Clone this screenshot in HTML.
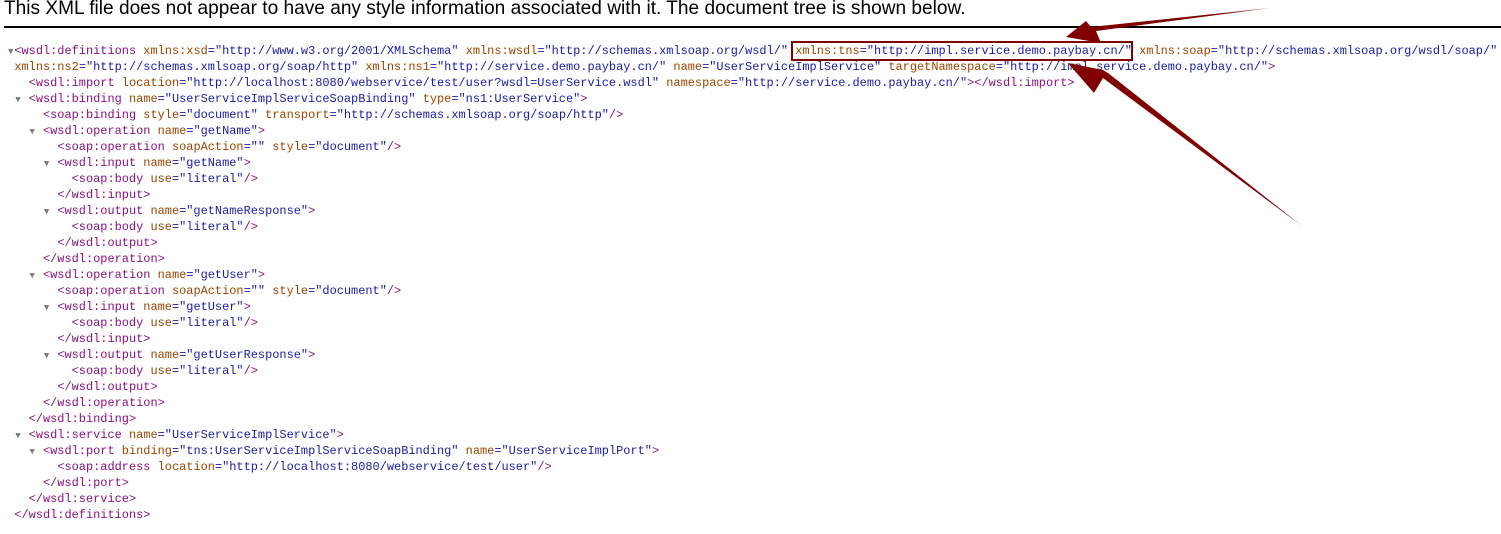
<!DOCTYPE html>
<html><head><meta charset="utf-8"><style>
body{margin:0;background:#fff;width:1501px;height:534px;overflow:hidden;position:relative}
.hdr{position:absolute;left:4px;top:-2px;font:19.1px "Liberation Sans",sans-serif;color:#000;white-space:nowrap}
.rule{position:absolute;left:4px;right:0;top:26px;height:2px;background:#000}
.x{position:absolute;left:0;top:43px;font:11.95px/16px "Liberation Mono",monospace;color:#1a1aa6}
.x div{height:16px;white-space:pre}
.t{color:#881280}.a{color:#994500}
.tri{display:inline-block;width:7.17px;color:#777;font-size:9px;text-align:center}
.box{position:absolute;left:791px;top:41px;width:338px;height:16px;border:2px solid #800000}
svg{position:absolute;left:0;top:0}
</style></head><body>
<div class="hdr">This XML file does not appear to have any style information associated with it. The document tree is shown below.</div>
<div class="rule"></div>
<div class="x"><div> <span class="tri">▼</span><span class="t">&lt;wsdl:definitions</span> <span class="a">xmlns:xsd</span>="http://www.w3.org/2001/XMLSchema" <span class="a">xmlns:wsdl</span>="http://schemas.xmlsoap.org/wsdl/" <span class="a">xmlns:tns</span>="http://impl.service.demo.paybay.cn/" <span class="a">xmlns:soap</span>="http://schemas.xmlsoap.org/wsdl/soap/"</div><div>  <span class="a">xmlns:ns2</span>="http://schemas.xmlsoap.org/soap/http" <span class="a">xmlns:ns1</span>="http://service.demo.paybay.cn/" <span class="a">name</span>="UserServiceImplService" <span class="a">targetNamespace</span>="http://impl.service.demo.paybay.cn/"<span class="t">&gt;</span></div><div>    <span class="t">&lt;wsdl:import</span> <span class="a">location</span>="http://localhost:8080/webservice/test/user?wsdl=UserService.wsdl" <span class="a">namespace</span>="http://service.demo.paybay.cn/"<span class="t">&gt;&lt;/wsdl:import&gt;</span></div><div>  <span class="tri">▼</span> <span class="t">&lt;wsdl:binding</span> <span class="a">name</span>="UserServiceImplServiceSoapBinding" <span class="a">type</span>="ns1:UserService"<span class="t">&gt;</span></div><div>      <span class="t">&lt;soap:binding</span> <span class="a">style</span>="document" <span class="a">transport</span>="http://schemas.xmlsoap.org/soap/http"<span class="t">/&gt;</span></div><div>    <span class="tri">▼</span> <span class="t">&lt;wsdl:operation</span> <span class="a">name</span>="getName"<span class="t">&gt;</span></div><div>        <span class="t">&lt;soap:operation</span> <span class="a">soapAction</span>="" <span class="a">style</span>="document"<span class="t">/&gt;</span></div><div>      <span class="tri">▼</span> <span class="t">&lt;wsdl:input</span> <span class="a">name</span>="getName"<span class="t">&gt;</span></div><div>          <span class="t">&lt;soap:body</span> <span class="a">use</span>="literal"<span class="t">/&gt;</span></div><div>        <span class="t">&lt;/wsdl:input&gt;</span></div><div>      <span class="tri">▼</span> <span class="t">&lt;wsdl:output</span> <span class="a">name</span>="getNameResponse"<span class="t">&gt;</span></div><div>          <span class="t">&lt;soap:body</span> <span class="a">use</span>="literal"<span class="t">/&gt;</span></div><div>        <span class="t">&lt;/wsdl:output&gt;</span></div><div>      <span class="t">&lt;/wsdl:operation&gt;</span></div><div>    <span class="tri">▼</span> <span class="t">&lt;wsdl:operation</span> <span class="a">name</span>="getUser"<span class="t">&gt;</span></div><div>        <span class="t">&lt;soap:operation</span> <span class="a">soapAction</span>="" <span class="a">style</span>="document"<span class="t">/&gt;</span></div><div>      <span class="tri">▼</span> <span class="t">&lt;wsdl:input</span> <span class="a">name</span>="getUser"<span class="t">&gt;</span></div><div>          <span class="t">&lt;soap:body</span> <span class="a">use</span>="literal"<span class="t">/&gt;</span></div><div>        <span class="t">&lt;/wsdl:input&gt;</span></div><div>      <span class="tri">▼</span> <span class="t">&lt;wsdl:output</span> <span class="a">name</span>="getUserResponse"<span class="t">&gt;</span></div><div>          <span class="t">&lt;soap:body</span> <span class="a">use</span>="literal"<span class="t">/&gt;</span></div><div>        <span class="t">&lt;/wsdl:output&gt;</span></div><div>      <span class="t">&lt;/wsdl:operation&gt;</span></div><div>    <span class="t">&lt;/wsdl:binding&gt;</span></div><div>  <span class="tri">▼</span> <span class="t">&lt;wsdl:service</span> <span class="a">name</span>="UserServiceImplService"<span class="t">&gt;</span></div><div>    <span class="tri">▼</span> <span class="t">&lt;wsdl:port</span> <span class="a">binding</span>="tns:UserServiceImplServiceSoapBinding" <span class="a">name</span>="UserServiceImplPort"<span class="t">&gt;</span></div><div>        <span class="t">&lt;soap:address</span> <span class="a">location</span>="http://localhost:8080/webservice/test/user"<span class="t">/&gt;</span></div><div>      <span class="t">&lt;/wsdl:port&gt;</span></div><div>    <span class="t">&lt;/wsdl:service&gt;</span></div><div>  <span class="t">&lt;/wsdl:definitions&gt;</span></div></div>
<div class="box"></div>
<svg width="1501" height="534">
<polygon fill="#800000" points="1270,8 1096,31 1101,43 1066,37 1086,21 1091,27" />
<polygon fill="#800000" points="1302,226 1103,78 1094,93 1068,63 1103,70 1108,73" />
</svg>
</body></html>
